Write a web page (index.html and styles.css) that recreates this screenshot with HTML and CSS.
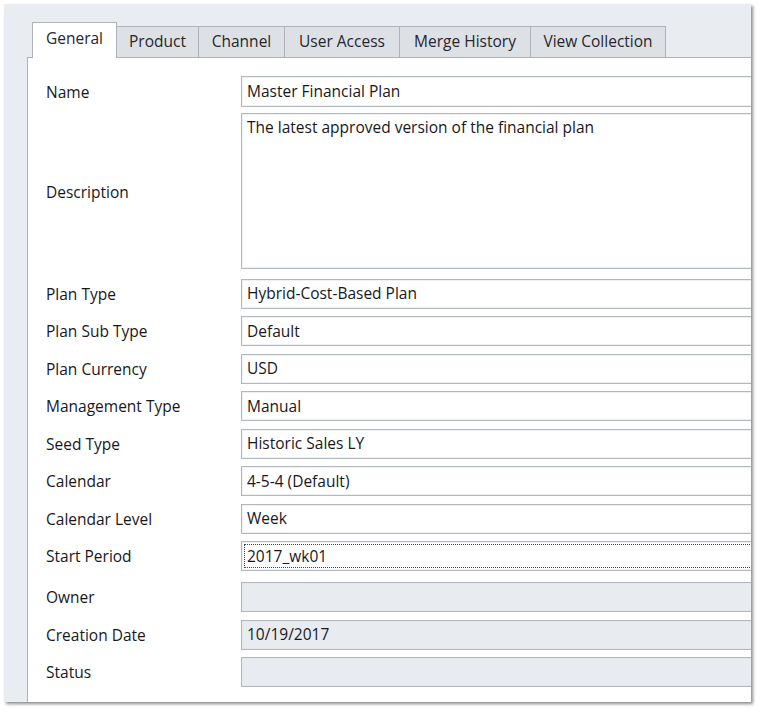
FILE: index.html
```html
<!DOCTYPE html>
<html>
<head>
<meta charset="utf-8">
<link rel="stylesheet" href="styles.css">
</head>
<body>
<div class="window">
  <div class="tabs">
    <div class="tab active">General</div>
    <div class="tab">Product</div>
    <div class="tab">Channel</div>
    <div class="tab">User Access</div>
    <div class="tab">Merge History</div>
    <div class="tab">View Collection</div>
  </div>
  <div class="panel">
    <div class="form">
      <div class="label">Name</div>
      <div class="field first">Master Financial Plan</div>

      <div class="label">Description</div>
      <div class="field area">The latest approved version of the financial plan</div>

      <div class="label gap-top">Plan Type</div>
      <div class="field gap-top">Hybrid-Cost-Based Plan</div>

      <div class="label">Plan Sub Type</div>
      <div class="field">Default</div>

      <div class="label">Plan Currency</div>
      <div class="field">USD</div>

      <div class="label">Management Type</div>
      <div class="field">Manual</div>

      <div class="label">Seed Type</div>
      <div class="field">Historic Sales LY</div>

      <div class="label">Calendar</div>
      <div class="field">4-5-4 (Default)</div>

      <div class="label">Calendar Level</div>
      <div class="field">Week</div>

      <div class="label">Start Period</div>
      <div class="field focus"><span class="focus-ring">2017_wk01</span></div>

      <div class="label gap-top2">Owner</div>
      <div class="field disabled gap-top2"></div>

      <div class="label">Creation Date</div>
      <div class="field disabled">10/19/2017</div>

      <div class="label">Status</div>
      <div class="field disabled"></div>
    </div>
  </div>
</div>
</body>
</html>
```

FILE: styles.css
```css
html, body {
  margin: 0;
  padding: 0;
  background: #ffffff;
}

body {
  font-family: "Open Sans", "Liberation Sans", sans-serif;
  font-size: 15.5px;
  color: #18181c;
  width: 763px;
  height: 714px;
  overflow: hidden;
}

.window {
  margin: 4px 0 0 4px;
  width: 747px;
  height: 698px;
  background: #e9ecf0;
  box-shadow: 2px 2px 3px rgba(0, 0, 0, 0.45);
  overflow: hidden;
  display: flex;
  flex-direction: column;
  padding-left: 23px;
  box-sizing: border-box;
}

.tabs {
  display: flex;
  align-items: flex-end;
  padding: 18px 0 0 5px;
  height: 53px;
  box-sizing: border-box;
  position: relative;
  z-index: 1;
}

.tab {
  height: 31px;
  box-sizing: border-box;
  display: flex;
  align-items: center;
  justify-content: center;
  background: #dde1e6;
  border: 1px solid #aeb3ba;
  border-left: none;
  border-bottom: none;
  color: #26262c;
  padding: 0 0 2px 0;
}

.tab.active {
  width: 85px;
  height: 36px;
  margin-bottom: -1px;
  background: #ffffff;
  border-left: 1px solid #aeb3ba;
  border-right: 1px solid #aeb3ba;
  padding: 0 0 6px 0;
}

.tab:nth-child(2) { width: 82px; }
.tab:nth-child(3) { width: 86px; }
.tab:nth-child(4) { width: 115px; }
.tab:nth-child(5) { width: 131px; }
.tab:nth-child(6) { width: 135px; }

.panel {
  flex: 1;
  background: #ffffff;
  border-left: 1px solid #aeb3ba;
  border-top: 1px solid #aeb3ba;
  padding: 18px 0 0 18px;
}

.form {
  display: grid;
  grid-template-columns: 195px 560px;
  row-gap: 7.5px;
}

.label {
  display: flex;
  align-items: center;
  color: #18181c;
}

.field {
  height: 30px;
  box-sizing: border-box;
  border: 1px solid #b3b8bf;
  box-shadow: inset 0 0 0 1px #eef0f3;
  background: #ffffff;
  padding: 0 5px 1px;
  display: flex;
  align-items: center;
  white-space: nowrap;
}

.field.first {
  height: 31px;
}

.field.area {
  height: 156px;
  align-items: flex-start;
  padding-top: 2px;
  margin-top: -1.5px;
}

.gap-top { margin-top: 2px; }
.gap-top2 { margin-top: 3.5px; }

.field.disabled {
  background: #e8ebf0;
  box-shadow: inset 0 0 0 1px #e3e6eb;
}

.field.focus {
  padding: 2px;
}

.focus-ring {
  flex: 1;
  align-self: stretch;
  display: flex;
  align-items: center;
  padding: 0 0 1px 2px;
  border: 1px dotted #444;
}
```
